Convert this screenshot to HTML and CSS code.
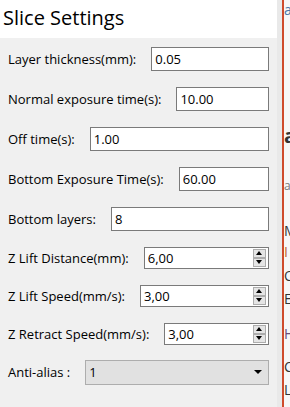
FILE: index.html
```html
<!DOCTYPE html>
<html lang="en">
<head>
    <meta charset="UTF-8">
    <title>Slice Settings</title>
    <link rel="stylesheet" href="styles.css">
</head>
<body>
    <div class="window">
        <section class="panel">
            <h1 class="panel-title">Slice Settings</h1>
            <div class="form">
                <div class="row">
                    <label>Layer thickness(mm):</label>
                    <input type="text" value="0.05">
                </div>
                <div class="row">
                    <label>Normal exposure time(s):</label>
                    <input type="text" value="10.00">
                </div>
                <div class="row">
                    <label>Off time(s):</label>
                    <input type="text" value="1.00">
                </div>
                <div class="row">
                    <label>Bottom Exposure Time(s):</label>
                    <input type="text" value="60.00">
                </div>
                <div class="row">
                    <label>Bottom layers:</label>
                    <input type="text" value="8">
                </div>
                <div class="row row-small">
                    <label>Z Lift Distance(mm):</label>
                    <div class="spin">
                        <input type="text" value="6,00">
                        <div class="spin-btns">
                            <button class="spin-up"></button>
                            <button class="spin-down"></button>
                        </div>
                    </div>
                </div>
                <div class="row row-small">
                    <label>Z Lift Speed(mm/s):</label>
                    <div class="spin">
                        <input type="text" value="3,00">
                        <div class="spin-btns">
                            <button class="spin-up"></button>
                            <button class="spin-down"></button>
                        </div>
                    </div>
                </div>
                <div class="row row-small">
                    <label>Z Retract Speed(mm/s):</label>
                    <div class="spin">
                        <input type="text" value="3,00">
                        <div class="spin-btns">
                            <button class="spin-up"></button>
                            <button class="spin-down"></button>
                        </div>
                    </div>
                </div>
                <div class="row row-small">
                    <label>Anti-alias :</label>
                    <div class="combo">
                        <span>1</span>
                        <span class="combo-arrow"></span>
                    </div>
                </div>
            </div>
        </section>
        <div class="edge"></div>
        <div class="behind">
            <div class="behind-line link" style="height: 22px">a</div>
            <div class="behind-line" style="height: 96px"></div>
            <div class="behind-line bold" style="height: 59px">a</div>
            <div class="behind-line small" style="height: 44px">a</div>
            <div class="behind-line" style="height: 21px">M</div>
            <div class="behind-line orange" style="height: 24px">I</div>
            <div class="behind-line" style="height: 23px">O</div>
            <div class="behind-line" style="height: 35px">E</div>
            <div class="behind-line purple" style="height: 33px">H</div>
            <div class="behind-line" style="height: 23px">C</div>
            <div class="behind-line" style="height: 22px">Ш</div>
        </div>
    </div>
</body>
</html>
```

FILE: styles.css
```css
body {
    margin: 0;
    font-family: "Open Sans", "Noto Sans", sans-serif;
    color: #000;
    background-color: #f7f7f7;
}
.window {
    display: flex;
    height: 407px;
    overflow: hidden;
}
.panel {
    width: 277px;
    flex-shrink: 0;
    display: flex;
    flex-direction: column;
    background-color: #f0f0f0;
}
.panel-title {
    margin: 0;
    height: 38px;
    padding-left: 3px;
    box-sizing: border-box;
    background-color: #fff;
    font-size: 20px;
    font-weight: normal;
    line-height: 36px;
}
.form {
    padding: 1px 8px 0 8px;
}
.row {
    display: flex;
    align-items: center;
    gap: 15px;
    height: 40px;
    font-size: 13px;
}
.row-small {
    height: 38px;
}
.row label {
    white-space: nowrap;
}
.row input {
    flex: 1;
    min-width: 0;
    width: 0;
    height: 24px;
    box-sizing: border-box;
    border: 1px solid #7a7a7a;
    padding: 0 3px;
    font-family: inherit;
    font-size: 13px;
    color: #000;
    background-color: #fff;
    outline: none;
}
.spin {
    flex: 1;
    min-width: 0;
    display: flex;
    align-items: center;
    height: 22px;
    box-sizing: border-box;
    border: 1px solid #7a7a7a;
    background-color: #fff;
    padding-right: 2px;
}
.spin input {
    height: 20px;
    border: none;
}
.spin-btns {
    display: flex;
    flex-direction: column;
    gap: 0;
}
.spin-btns button {
    width: 13px;
    height: 9px;
    padding: 0;
    border: 1px solid #adadad;
    background-color: #e5e5e5;
    position: relative;
}
.spin-up::after,
.spin-down::after {
    content: "";
    position: absolute;
    left: 2px;
    top: 1px;
    border-left: 3px solid transparent;
    border-right: 3px solid transparent;
}
.spin-up::after {
    border-bottom: 4px solid #000;
}
.spin-down::after {
    border-top: 4px solid #000;
}
.combo {
    flex: 1;
    min-width: 0;
    display: flex;
    align-items: center;
    justify-content: space-between;
    height: 25px;
    box-sizing: border-box;
    border: 1px solid #adadad;
    background-color: #e1e1e1;
    padding: 0 6px 0 3px;
}
.combo-arrow {
    border-left: 4px solid transparent;
    border-right: 4px solid transparent;
    border-top: 4px solid #000;
}
.edge {
    width: 5px;
    flex-shrink: 0;
    background-color: #e9e9e9;
    border-right: 2px solid #cf4b2c;
}
.behind {
    flex: 1;
    overflow: hidden;
    font-size: 14px;
    color: #333;
}
.behind-line {
    white-space: nowrap;
}
.link {
    color: #4a78a8;
}
.bold {
    font-size: 20px;
    font-weight: bold;
    padding-top: 4px;
    box-sizing: border-box;
}
.small {
    font-size: 12px;
    color: #777;
}
.orange {
    color: #c0622e;
}
.purple {
    color: #6a4a7a;
}
```
